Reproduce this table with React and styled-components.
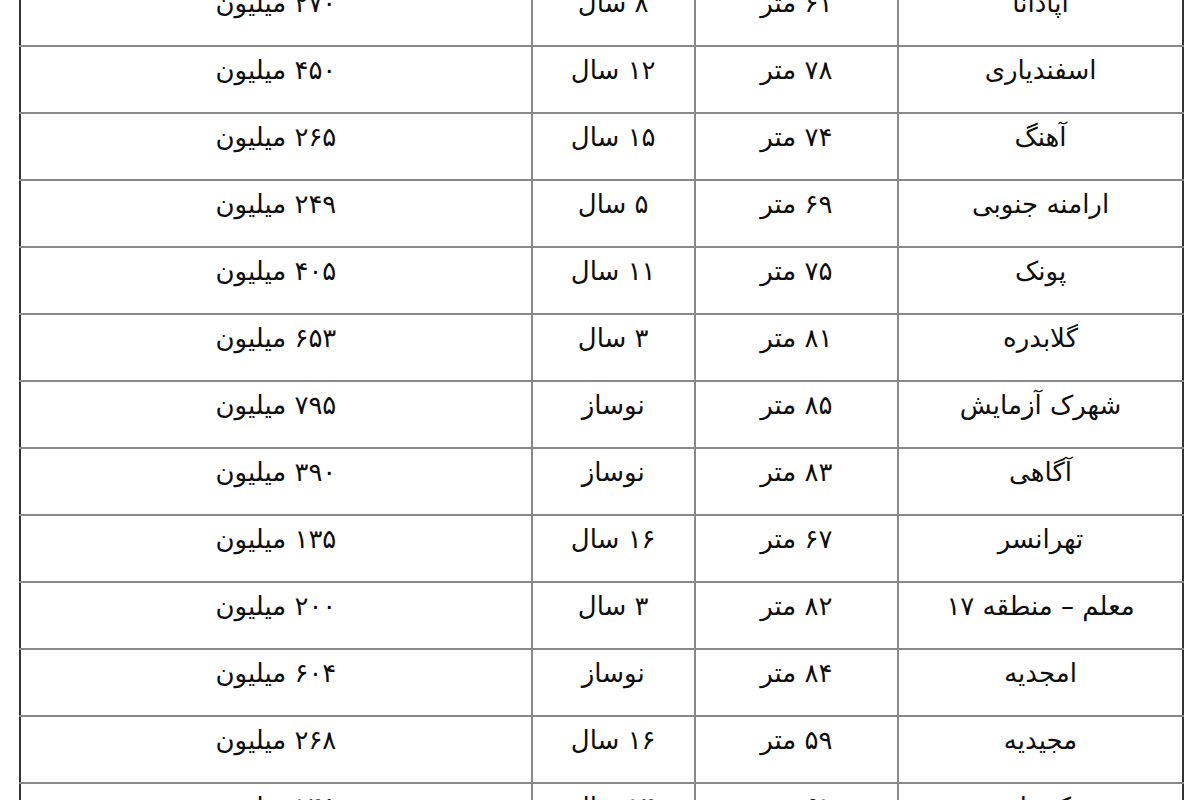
import React from 'react';
import styled, { createGlobalStyle } from 'styled-components';

const GlobalStyle = createGlobalStyle`
  html, body {
    margin: 0;
    padding: 0;
    background: #ffffff;
    overflow: hidden;
  }
`;

const Page = styled.div`
  width: 1200px;
  height: 800px;
  overflow: hidden;
  background: #fff;
`;

const Table = styled.table`
  direction: rtl;
  border-collapse: collapse;
  table-layout: fixed;
  width: 1165px;
  margin: -22px 0 0 19px;
  font-family: "DejaVu Sans", "Noto Sans", sans-serif;
  color: #0e0e0e;
  border-left: 2px solid #333;
  border-right: 2px solid #333;
`;

const Col = styled.col`
  width: ${(p) => p.$w};
`;

const Row = styled.tr`
  height: 67px;
`;

const Cell = styled.td`
  box-sizing: border-box;
  border: 2px solid #888;
  padding: 5px 0 0;
  vertical-align: top;
  text-align: center;
  font-size: 26px;
  line-height: 36px;
  white-space: nowrap;
  overflow: hidden;
  &:first-child {
    border-right: 2px solid #333;
  }
  &:last-child {
    border-left: 2px solid #333;
  }
`;

// ستون‌ها از راست به چپ: محله، متراژ، سن بنا، قیمت
const widths = ['24.5%', '17.5%', '14%', '44%'];

const rows = [
  ['آپادانا', '۶۱ متر', '۸ سال', '۲۷۰ میلیون'],
  ['اسفندیاری', '۷۸ متر', '۱۲ سال', '۴۵۰ میلیون'],
  ['آهنگ', '۷۴ متر', '۱۵ سال', '۲۶۵ میلیون'],
  ['ارامنه جنوبی', '۶۹ متر', '۵ سال', '۲۴۹ میلیون'],
  ['پونک', '۷۵ متر', '۱۱ سال', '۴۰۵ میلیون'],
  ['گلابدره', '۸۱ متر', '۳ سال', '۶۵۳ میلیون'],
  ['شهرک آزمایش', '۸۵ متر', 'نوساز', '۷۹۵ میلیون'],
  ['آگاهی', '۸۳ متر', 'نوساز', '۳۹۰ میلیون'],
  ['تهرانسر', '۶۷ متر', '۱۶ سال', '۱۳۵ میلیون'],
  ['معلم – منطقه ۱۷', '۸۲ متر', '۳ سال', '۲۰۰ میلیون'],
  ['امجدیه', '۸۴ متر', 'نوساز', '۶۰۴ میلیون'],
  ['مجیدیه', '۵۹ متر', '۱۶ سال', '۲۶۸ میلیون'],
  ['شهرک ولیعصر', '۶۱ متر', '۱۴ سال', '۱۴۵ میلیون'],
];

export default function App() {
  return (
    <>
      <GlobalStyle />
      <Page>
        <Table>
          <colgroup>
            {widths.map((w, i) => (
              <Col key={i} $w={w} />
            ))}
          </colgroup>
          <tbody>
            {rows.map((r, i) => (
              <Row key={i}>
                {r.map((c, j) => (
                  <Cell key={j}>{c}</Cell>
                ))}
              </Row>
            ))}
          </tbody>
        </Table>
      </Page>
    </>
  );
}
